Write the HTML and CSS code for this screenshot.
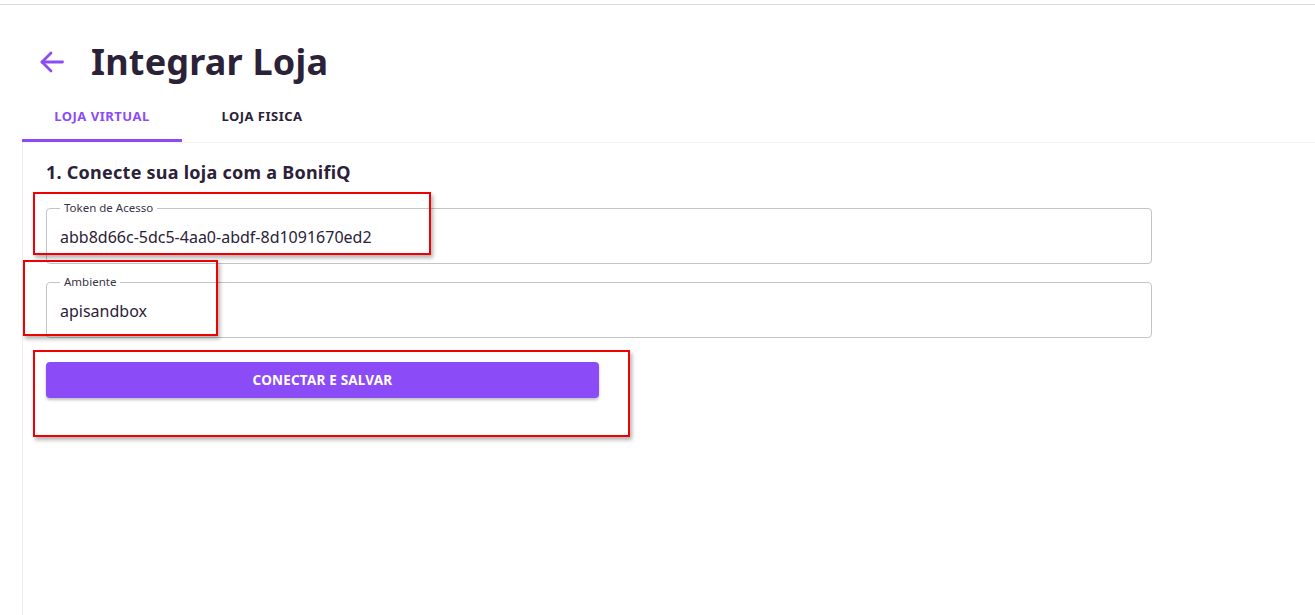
FILE: index.html
```html
<!DOCTYPE html>
<html lang="pt-BR">
<head>
  <meta charset="UTF-8" />
  <meta name="viewport" content="width=device-width, initial-scale=1.0"/>
  <title>Integrar Loja</title>
  <link rel="stylesheet" href="styles.css">
</head>
<body>

  <div class="topbar"></div>

  <div class="page">
    <!-- Header with back arrow -->
    <div class="header">
      <a class="back" href="#">
        <svg width="26" height="24" viewBox="0 0 26 24" fill="none" stroke="#8b4cf7" stroke-width="2.8" stroke-linecap="round" stroke-linejoin="round">
          <path d="M23.5 12H3"/>
          <path d="M12 3L3 12l9 9"/>
        </svg>
      </a>
      <h1>Integrar Loja</h1>
    </div>

    <!-- Tabs -->
    <div class="tabs">
      <div class="tab active">LOJA VIRTUAL</div>
      <div class="tab">LOJA FISICA</div>
    </div>

    <!-- Tab content -->
    <div class="card">
      <h2>1. Conecte sua loja com a BonifiQ</h2>

      <div class="field">
        <label>Token de Acesso</label>
        <input type="text" value="abb8d66c-5dc5-4aa0-abdf-8d1091670ed2" />
      </div>

      <div class="field">
        <label>Ambiente</label>
        <input type="text" value="apisandbox" />
      </div>

      <button class="submit-button">CONECTAR E SALVAR</button>

      <!-- highlight boxes -->
      <div class="mark mark1"></div>
      <div class="mark mark2"></div>
      <div class="mark mark3"></div>
    </div>
  </div>

</body>
</html>
```

FILE: styles.css
```css
body {
  font-family: "Noto Sans", Arial, sans-serif;
  margin: 0;
  background: #fff;
  color: #2b2238;
  height: 615px;
  overflow: hidden;
}

.topbar {
  height: 4px;
  border-bottom: 1px solid #dcdcdc;
}

.page {
  padding-left: 22px;
}

.header {
  display: flex;
  align-items: center;
  height: 87px;
  padding-left: 17px;
  padding-top: 25px;
  box-sizing: border-box;
}

.back {
  display: flex;
  width: 26px;
  height: 24px;
  margin-right: 26px;
  margin-top: 2px;
}

h1 {
  font-size: 36px;
  font-weight: 700;
  margin: 0;
  letter-spacing: 0.2px;
  color: #2b2238;
}

.tabs {
  display: flex;
  height: 50px;
}

.tab {
  width: 160px;
  display: flex;
  align-items: center;
  justify-content: center;
  font-size: 13px;
  font-weight: 700;
  letter-spacing: 0.5px;
  color: #2b2238;
  box-sizing: border-box;
  border-bottom: 3px solid transparent;
  padding-top: 1px;
}

.tab.active {
  color: #8b4cf7;
  border-bottom-color: #8b4cf7;
}

.card {
  position: relative;
  border-left: 1px solid #eeeeee;
  border-top: 1px solid #f4f4f4;
  padding: 18px 0 0 23px;
  height: 480px;
}

h2 {
  font-size: 18px;
  line-height: 22px;
  font-weight: 700;
  letter-spacing: 0.25px;
  margin: 0 0 25px;
  color: #2b2238;
}

.field {
  position: relative;
  display: flex;
  align-items: center;
  width: 1106px;
  height: 56px;
  box-sizing: border-box;
  margin-bottom: 18px;
  padding: 0 13px;
  border: 1px solid #c4c4c4;
  border-radius: 4px;
}

/* outlined label sitting on the top border */
.field label {
  position: absolute;
  left: 13px;
  top: -8px;
  font-size: 11.5px;
  line-height: 14px;
  color: #3a3346;
  padding: 0 4px;
  background: #fff;
}

.field input {
  border: none;
  outline: none;
  font-family: inherit;
  font-size: 16px;
  color: #2b2238;
  width: 100%;
  padding: 1px 0 0;
  background: transparent;
}

.submit-button {
  display: block;
  width: 553px;
  height: 36px;
  margin-top: 24px;
  background-color: #8b4cf7;
  color: white;
  border: none;
  border-radius: 4px;
  font-family: inherit;
  font-size: 13.5px;
  font-weight: 700;
  letter-spacing: 0.2px;
  box-shadow: 0 2px 3px rgba(0, 0, 0, 0.25);
  cursor: pointer;
}

/* red highlight boxes drawn over the form */
.mark {
  position: absolute;
  border: 2px solid #f00000;
  box-shadow: 2px 3px 4px rgba(0, 0, 0, 0.3);
}

.mark1 { left: 10px; top: 49px; width: 394px; height: 59px; }
.mark2 { left: 0px; top: 117px; width: 191px; height: 72px; }
.mark3 { left: 10px; top: 207px; width: 593px; height: 83px; }
```
